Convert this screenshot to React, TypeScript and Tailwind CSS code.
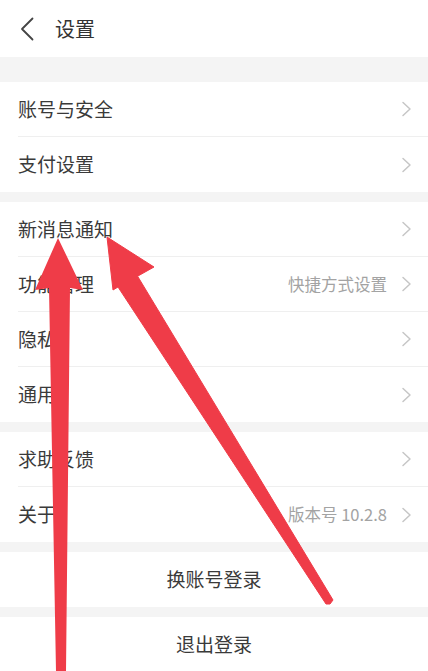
import React from 'react';

type Item = { label: string; value?: string };

const groups: Item[][] = [
  [{ label: '账号与安全' }, { label: '支付设置' }],
  [
    { label: '新消息通知' },
    { label: '功能管理', value: '快捷方式设置' },
    { label: '隐私' },
    { label: '通用' },
  ],
  [{ label: '求助反馈' }, { label: '关于', value: '版本号 10.2.8' }],
];

function Chevron() {
  return (
    <svg width="11" height="16" viewBox="0 0 11 16" fill="none">
      <path d="M2 1.5 L9 8 L2 14.5" stroke="#c6c6c6" strokeWidth="1.5" strokeLinecap="round" strokeLinejoin="round" />
    </svg>
  );
}

function Row({ item, last }: { item: Item; last: boolean }) {
  return (
    <div className="pl-[18px] bg-white">
      <div className={`h-[55px] flex items-center pr-[16px] ${last ? '' : 'border-b border-[#efefef]'}`}>
        <span className="flex-1 text-[19px] text-[#3a3a3a]">{item.label}</span>
        {item.value && <span className="text-[16.5px] text-[#a3a3a3] mr-[14px]">{item.value}</span>}
        <Chevron />
      </div>
    </div>
  );
}

function Arrows() {
  return (
    <svg className="absolute inset-0 pointer-events-none" width="428" height="671" viewBox="0 0 428 671">
      <polygon
        points="58,238 83,290 70,288 66,671 56,671 49,288 35,290"
        fill="#ef3c48"
        strokeLinejoin="round"
      />
      <polygon
        points="107,237 154,267 137.6,276.2 333,600 330,604 326,604 118,287 113,290"
        fill="#ef3c48"
        stroke="#ef3c48"
        strokeWidth="1"
        strokeLinejoin="round"
      />
    </svg>
  );
}

export default function App() {
  return (
    <div
      className="relative w-[428px] h-[671px] overflow-hidden bg-[#f4f4f4]"
      style={{ fontFamily: '"Noto Sans CJK SC", "Noto Sans", sans-serif' }}
    >
      {/* Header */}
      <div className="h-[57px] bg-white flex items-center pl-[20px]">
        <svg width="14" height="24" viewBox="0 0 14 24" fill="none">
          <path d="M12.5 1.5 L2 12 L12.5 22.5" stroke="#444" strokeWidth="1.8" strokeLinecap="round" strokeLinejoin="round" />
        </svg>
        <span className="ml-[21px] text-[20px] text-[#333]">设置</span>
      </div>

      <div className="h-[25px]" />

      <div className="flex flex-col gap-[10px]">
        {groups.map((g, gi) => (
          <div key={gi}>
            {g.map((item, i) => (
              <Row key={item.label} item={item} last={i === g.length - 1} />
            ))}
          </div>
        ))}
        <div className="h-[55px] bg-white flex items-center justify-center text-[19px] text-[#3a3a3a]">换账号登录</div>
        <div className="h-[54px] bg-white flex items-center justify-center text-[19px] text-[#3a3a3a]">退出登录</div>
      </div>

      <Arrows />
    </div>
  );
}
